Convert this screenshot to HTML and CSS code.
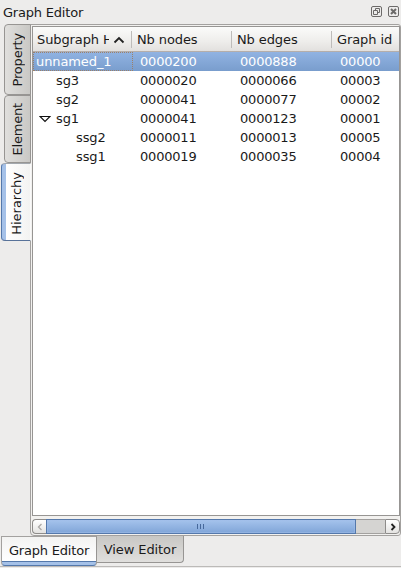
FILE: index.html
```html
<!DOCTYPE html>
<html lang="en">
<head>
<meta charset="utf-8">
<title>Graph Editor</title>
<link rel="stylesheet" href="styles.css">
</head>
<body>
<div class="dock">
  <header class="title"><span>Graph Editor</span>
    <svg class="controls" width="28" height="11" viewBox="0 0 28 11" fill="none" stroke="#6c6a69">
      <rect x=".5" y=".5" width="10" height="10" rx="1.5"/>
      <path d="M4.500 4.500v-2h4v4h-2M2.500 4.500h4v4h-4z"/>
      <rect x="17.500" y=".5" width="10" height="10" rx="1.500"/>
      <path d="M20 3l5 5M25 3l-5 5" stroke-width="2"/>
    </svg>
  </header>
  <main class="body">
    <nav class="side">
      <div class="vtab property"><span>Property</span></div>
      <div class="vtab element"><span>Element</span></div>
      <div class="vtab active"><span>Hierarchy</span></div>
    </nav>
    <section class="frame">
      <div class="tree">
        <div class="row head">
          <div class="sorted"><span>Subgraph H</span><svg width="12" height="8" viewBox="0 0 12 8" fill="none" stroke="#222" stroke-width="1.8"><path d="M1.500 6.500L6 2l4.500 4.500"/></svg></div>
          <div>Nb nodes</div><div>Nb edges</div><div>Graph id</div>
        </div>
        <div class="row selected"><div>unnamed_1</div><div>0000200</div><div>0000888</div><div>00000</div></div>
        <div class="row"><div class="l1">sg3</div><div>0000020</div><div>0000066</div><div>00003</div></div>
        <div class="row"><div class="l1">sg2</div><div>0000041</div><div>0000077</div><div>00002</div></div>
        <div class="row"><div class="open"><svg width="12" height="8" viewBox="0 0 12 8" fill="#fff" stroke="#111" stroke-width="1.200"><path d="M1 1.500h10L6 6.500z"/></svg>sg1</div><div>0000041</div><div>0000123</div><div>00001</div></div>
        <div class="row"><div class="l2">ssg2</div><div>0000011</div><div>0000013</div><div>00005</div></div>
        <div class="row"><div class="l2">ssg1</div><div>0000019</div><div>0000035</div><div>00004</div></div>
      </div>
      <div class="scroll">
        <div class="btn left"><svg width="6" height="8" viewBox="0 0 6 8" fill="none" stroke="#aaa8a6" stroke-width="1.300"><path d="M4.500 1L1.500 4l3 3"/></svg></div>
        <div class="thumb"><i></i><i></i><i></i></div>
        <div class="groove"></div>
        <div class="btn right"><svg width="6" height="8" viewBox="0 0 6 8" fill="none" stroke="#222" stroke-width="1.800"><path d="M1.500 1l3 3-3 3"/></svg></div>
      </div>
    </section>
  </main>
  <footer class="tabs"><div class="tab on">Graph Editor</div><div class="tab">View Editor</div></footer>
</div>
</body>
</html>
```
FILE: styles.css
```css
* { box-sizing: border-box; }
body {
  margin: 0;
  background: #edeceb;
  color: #1a1a1a;
  font: 13px/19px "DejaVu Sans", sans-serif;
  letter-spacing: -0.2px;
  overflow: hidden;
}
svg { display: block; flex: none; }
.dock { width: 401px; height: 568px; display: flex; flex-direction: column; }
.title {
  height: 24px;
  padding: 0 2px 0 3px;
  display: flex;
  align-items: center;
  justify-content: space-between;
}
.controls { margin-top: -1px; }
.body { height: 512px; display: flex; }
.side { width: 30px; padding-left: 1px; display: flex; flex-direction: column; z-index: 1; }
.vtab {
  width: 27px;
  margin-left: 3px;
  border: 1px solid #979593;
  border-radius: 4px 0 0 4px;
  background: linear-gradient(90deg, #e0dfdd, #c9c8c5);
  display: flex;
  align-items: center;
  justify-content: center;
}
.vtab span { writing-mode: vertical-rl; transform: rotate(180deg); line-height: 18px; padding-bottom: 1px; }
.property { height: 71px; }
.element { height: 68px; }
.active {
  width: 30px;
  height: 78px;
  margin-left: 0;
  border-color: #a3a8ae #fafafa #587299 #5478ab;
  background: linear-gradient(90deg, #a5c1e8 0 4px, #fff 4px, #f3f3f2);
}
.active span { margin-left: 2px; letter-spacing: 0; padding-bottom: 2px; }
.frame {
  width: 371px;
  border: 1px solid #a3a19f;
  border-radius: 0 3px 3px 4px;
  padding: 1px 0 0 1px;
  background: #f2f1ef;
}
.tree { width: 368px; height: 490px; border: 1px solid #979593; background: #fff; }
.row { height: 19px; display: grid; grid-template-columns: 100px 100px 100px 66px; }
.row > div { padding-left: 7px; white-space: nowrap; letter-spacing: -0.2px; }
.row > div:first-child { padding-left: 3px; letter-spacing: -0.1px; }
.row > .l1:first-child { padding-left: 23px; }
.row > .l2:first-child { padding-left: 43px; }
.row > .open:first-child { display: flex; align-items: center; gap: 5px; padding-left: 6px; }
.row.head {
  height: 25px;
  line-height: 25px;
  background: linear-gradient(#fbfbfa, #eeedeb 60%, #e2e0de);
  border-bottom: 1px solid #b5aeaa;
}
.row.head > div { padding-left: 4px; letter-spacing: -0.1px; position: relative; }
.row.head > div:not(:last-child)::after {
  content: "";
  position: absolute;
  right: 1px;
  top: 4px;
  width: 1px;
  height: 17px;
  background: #bebcba;
}
.row.head > .sorted { display: flex; align-items: center; gap: 4px; }
.sorted span { width: 72px; overflow: hidden; }
.row.selected {
  color: #fff;
  background: linear-gradient(#91b3e2, #799dcd);
}
.row.selected > div:first-child { outline: 1px dotted #9b806a; outline-offset: -1px; }
.scroll { height: 16px; margin-top: 3px; width: 368px; display: flex; }
.btn {
  width: 15px;
  height: 15px;
  border: 1px solid #8e8c8a;
  background: linear-gradient(#fff, #e4e3e1);
  display: flex;
  align-items: center;
  justify-content: center;
}
.left { border-radius: 4px 0 0 4px; border-right: 0; width: 14px; }
.right { border-radius: 0 4px 4px 0; }
.thumb {
  width: 310px;
  height: 15px;
  border: 1px solid #5478ab;
  background: linear-gradient(#a5c3ec, #80a5d8);
  box-shadow: inset 0 0 0 1px #a1beea80;
  display: flex;
  align-items: center;
  justify-content: center;
  gap: 2px;
}
.thumb i { width: 1px; height: 5px; margin-left: -1px; margin-right: 1px; background: #46689b; }
.groove { width: 29px; height: 15px; border: solid #a3a19f; border-width: 1px 0; background: #d5d4d2; }
.tabs {
  height: 31px;
  display: flex;
  padding-left: 1px;
  border-bottom: 1px solid #bcbab8;
}
.tab {
  width: 87px;
  height: 27px;
  line-height: 27px;
  text-align: center;
  letter-spacing: -0.1px;
  border: solid #979593;
  border-width: 0 1px 1px 0;
  border-radius: 0 0 4px 0;
  background: linear-gradient(#c8c7c4, #e0dfdd);
}
.tab.on {
  width: 96px;
  height: 30px;
  line-height: 27px;
  border-left: 1px solid #a3a19f;
  border-top: 1px solid #a3a19f;
  border-bottom-color: #5478ab;
  border-radius: 0 0 4px 4px;
  letter-spacing: -0.2px;
  background: linear-gradient(#f3f3f2, #fff 24px, #5478ab 24px 25px, #a5c1e8 25px);
}
```
